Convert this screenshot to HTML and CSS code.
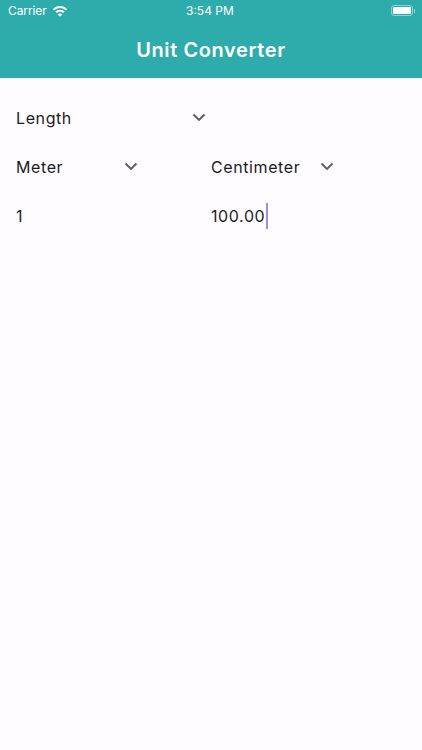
FILE: index.html
```html
<!DOCTYPE html>
<html lang="en">
<head>
    <meta charset="UTF-8">
    <meta name="viewport" content="width=device-width, initial-scale=1.0">
    <title>Unit Converter</title>
    <link rel="stylesheet" href="styles.css">
</head>
<body>
    <header class="app-header">
        <div class="status-bar">
            <div class="status-left">
                <span class="carrier">Carrier</span>
                <svg class="wifi-icon" viewBox="0 0 16 12" width="16" height="12">
                    <path d="M8 1C5.2 1 2.7 2.1.8 3.9l1.4 1.5C3.7 3.9 5.7 3 8 3s4.3.9 5.8 2.4l1.4-1.5C13.3 2.1 10.8 1 8 1z" fill="currentColor"/>
                    <path d="M8 4.7c-1.8 0-3.4.7-4.6 1.9l1.5 1.5C5.7 7.3 6.8 6.8 8 6.8s2.3.5 3.1 1.3l1.5-1.5C11.4 5.4 9.8 4.7 8 4.7z" fill="currentColor"/>
                    <path d="M8 8.4c-.9 0-1.7.4-2.3 1L8 11.7l2.3-2.3c-.6-.6-1.4-1-2.3-1z" fill="currentColor"/>
                </svg>
            </div>
            <span class="status-time">3:54 PM</span>
            <div class="battery">
                <div class="battery-body"><div class="battery-fill"></div></div>
                <div class="battery-cap"></div>
            </div>
        </div>
        <h1 class="app-title">Unit Converter</h1>
    </header>

    <main class="content">
        <div class="row">
            <div class="dropdown dropdown-category">
                <span>Length</span>
                <svg class="chevron" viewBox="0 0 14 9" width="14" height="9"><path d="M1.5 1.5 7 7l5.5-5.5" /></svg>
            </div>
        </div>
        <div class="row">
            <div class="col">
                <div class="dropdown dropdown-from">
                    <span>Meter</span>
                    <svg class="chevron" viewBox="0 0 14 9" width="14" height="9"><path d="M1.5 1.5 7 7l5.5-5.5" /></svg>
                </div>
            </div>
            <div class="col">
                <div class="dropdown dropdown-to">
                    <span>Centimeter</span>
                    <svg class="chevron" viewBox="0 0 14 9" width="14" height="9"><path d="M1.5 1.5 7 7l5.5-5.5" /></svg>
                </div>
            </div>
        </div>
        <div class="row">
            <div class="col"><span>1</span></div>
            <div class="col">
                <span>100.00</span><span class="cursor"></span>
            </div>
        </div>
    </main>
</body>
</html>
```

FILE: styles.css
```css
* {
    margin: 0;
    padding: 0;
    box-sizing: border-box;
}

body {
    font-family: Inter, "Liberation Sans", sans-serif;
    background: #fffcff;
    color: #1c1b1f;
    height: 750px;
    overflow: hidden;
}

.app-header {
    background: #2eabab;
    color: #fff;
    height: 78px;
}

.status-bar {
    height: 20px;
    padding: 1px 7px 0 8px;
    display: flex;
    justify-content: space-between;
    align-items: center;
    font-size: 12px;
}

.status-left {
    display: flex;
    align-items: center;
    gap: 5px;
}

.carrier {
    letter-spacing: -0.1px;
}

.status-time {
    position: absolute;
    left: 186px;
}

.battery {
    display: flex;
    align-items: center;
}

.battery-body {
    width: 22px;
    height: 11px;
    border: 1px solid rgba(255, 255, 255, 0.45);
    border-radius: 3px;
    padding: 1px;
}

.battery-fill {
    height: 100%;
    background: #fff;
    border-radius: 1px;
}

.battery-cap {
    width: 1px;
    height: 4px;
    background: rgba(255, 255, 255, 0.5);
    margin-left: 1px;
}

.app-title {
    font-size: 20px;
    font-weight: 600;
    letter-spacing: 0.6px;
    text-align: center;
    line-height: 24px;
    margin-top: 18px;
}

.content {
    padding: 15px 16px 0;
    font-size: 16px;
    letter-spacing: 0.6px;
}

.row {
    display: flex;
    height: 49px;
    align-items: center;
}

.col {
    width: 195.5px;
    display: flex;
    align-items: center;
}

.dropdown {
    display: flex;
    justify-content: space-between;
    align-items: center;
}

.dropdown-category {
    width: 190px;
}

.dropdown-from {
    width: 122px;
}

.dropdown-to {
    width: 123px;
}

.chevron {
    fill: none;
    stroke: #5c5c5c;
    stroke-width: 1.9;
}

.cursor {
    flex: none;
    width: 2px;
    height: 26px;
    margin-left: 0.5px;
    background: #a08ed8;
}
```
